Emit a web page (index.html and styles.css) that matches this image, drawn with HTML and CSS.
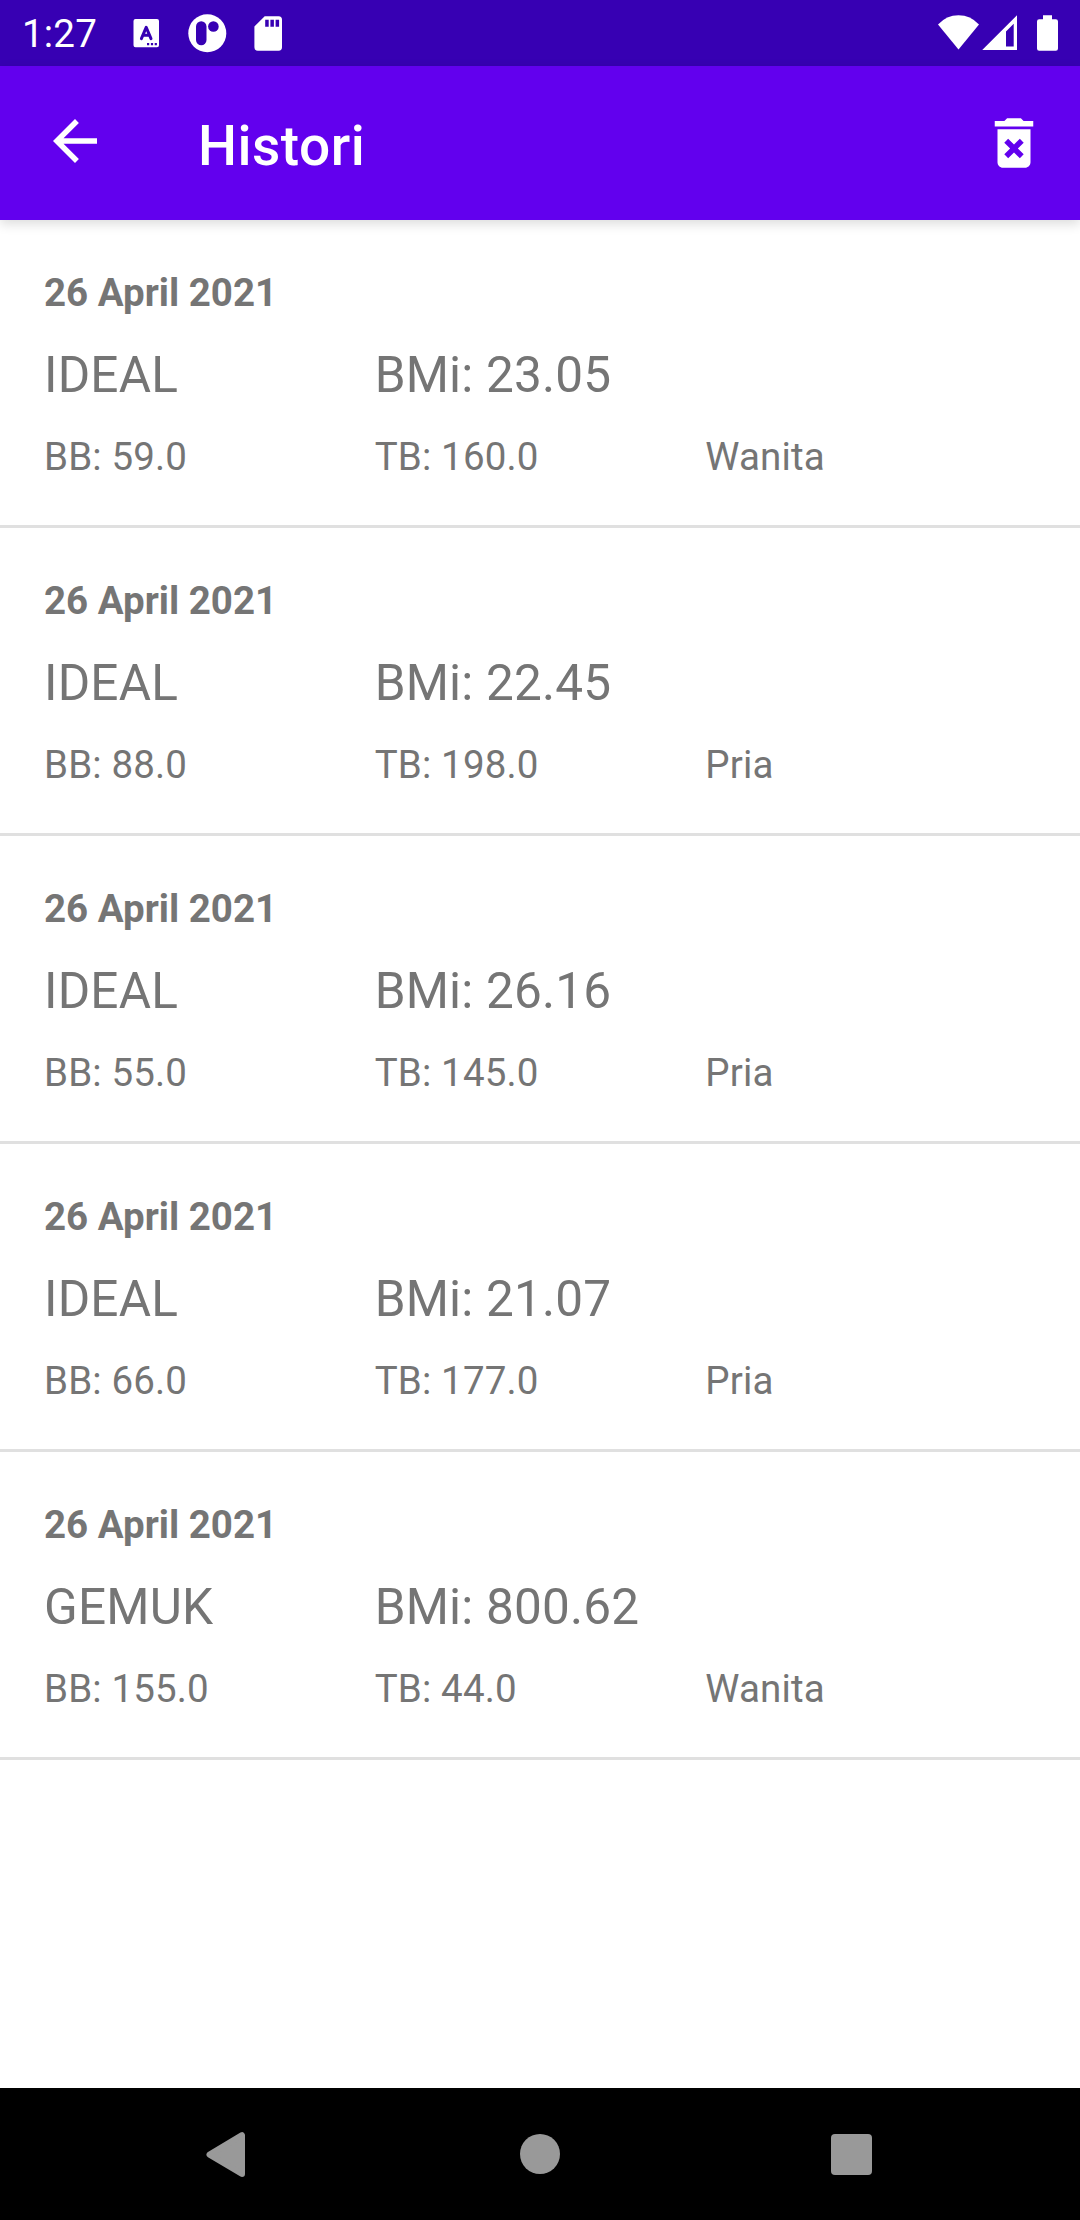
FILE: index.html
```html
<!DOCTYPE html>
<html lang="id">
<head>
<meta charset="utf-8">
<title>Histori</title>
<link rel="stylesheet" href="styles.css">
</head>
<body>
<div class="screen">
  <div class="status-bar">
    <span class="clock">1:27</span>
    <svg class="status-notifications" width="150" height="40" viewBox="0 0 150 40" fill="#fff">
      <path fill-rule="evenodd" d="M3.500 6h21.500a2 2 0 0 1 2 2v24.300a2 2 0 0 1-2 2H3.500a2 2 0 0 1-2-2V8a2 2 0 0 1 2-2zM15 30v2.200h2.200V30zm3.900 0v2.200h2.200V30zm3.800 0v2.200h2.200V30z"/>
      <path d="M9.400 25.600L14.200 14.300 19 25.600M11 22.300h6.400" fill="none" stroke="#3700b3" stroke-width="3" stroke-linecap="round" stroke-linejoin="round"/>
      <circle cx="75.300" cy="20.300" r="19"/>
      <rect x="64" y="8.300" width="10.500" height="24" rx="5.250" fill="#3700b3"/>
      <circle cx="81.400" cy="13.500" r="5.300" fill="#3700b3"/>
      <path fill-rule="evenodd" d="M132.700 3.300h14a3.400 3.400 0 0 1 3.300 3.400v27.600a3.400 3.400 0 0 1-3.400 3.400h-20.800a3.400 3.400 0 0 1-3.400-3.400V13.500zM133.200 6.700v7h3.500v-7zm5.200 0v7h3.500v-7zm5.200 0v7h3.500v-7z"/>
    </svg>
    <svg class="status-system" width="122" height="40" viewBox="0 0 122 40" fill="#fff">
      <path d="M0 11.500Q8.500 2.300 20.500 2.300T41 11.500L20.500 36.500z"/>
      <path fill-rule="evenodd" d="M44.200 37L79 2.300V37zM68 18.500V33.500h7.700V10.800z"/>
      <path d="M105 2.300h9v3.900h3.800a2.200 2.200 0 0 1 2.200 2.200v27.200a2.200 2.200 0 0 1-2.200 2.200h-16.600a2.200 2.200 0 0 1-2.200-2.200V8.400a2.200 2.200 0 0 1 2.200-2.200h3.800z"/>
    </svg>
  </div>
  <header class="app-bar">
    <svg class="icon-back" width="66" height="66" viewBox="0 0 24 24" fill="#fff"><path d="M20 11H7.830l5.590-5.590L12 4l-8 8 8 8 1.410-1.410L7.830 13H20v-2z"/></svg>
    <h1 class="title">Histori</h1>
    <svg class="icon-delete" width="66" height="66" viewBox="0 0 24 24" fill="#fff"><path d="M6 19c0 1.100.900 2 2 2h8c1.100 0 2-.900 2-2V7H6v12zm2.460-7.120l1.410-1.410L12 12.590l2.120-2.120 1.410 1.410L13.410 14l2.120 2.120-1.410 1.410L12 15.410l-2.120 2.120-1.410-1.410L10.590 14l-2.130-2.120zM15.500 4l-1-1h-5l-1 1H5v2h14V4z"/></svg>
  </header>
  <main class="history">
    <article class="entry">
      <div class="date">26 April 2021</div>
      <div class="row result"><span>IDEAL</span><span>BMi: 23.05</span></div>
      <div class="row"><span>BB: 59.0</span><span>TB: 160.0</span><span>Wanita</span></div>
    </article>
    <article class="entry">
      <div class="date">26 April 2021</div>
      <div class="row result"><span>IDEAL</span><span>BMi: 22.45</span></div>
      <div class="row"><span>BB: 88.0</span><span>TB: 198.0</span><span>Pria</span></div>
    </article>
    <article class="entry">
      <div class="date">26 April 2021</div>
      <div class="row result"><span>IDEAL</span><span>BMi: 26.16</span></div>
      <div class="row"><span>BB: 55.0</span><span>TB: 145.0</span><span>Pria</span></div>
    </article>
    <article class="entry">
      <div class="date">26 April 2021</div>
      <div class="row result"><span>IDEAL</span><span>BMi: 21.07</span></div>
      <div class="row"><span>BB: 66.0</span><span>TB: 177.0</span><span>Pria</span></div>
    </article>
    <article class="entry">
      <div class="date">26 April 2021</div>
      <div class="row result"><span>GEMUK</span><span>BMi: 800.62</span></div>
      <div class="row"><span>BB: 155.0</span><span>TB: 44.0</span><span>Wanita</span></div>
    </article>
  </main>
  <nav class="nav-bar">
    <svg class="nav-back" width="40" height="46" viewBox="0 0 40 46"><path d="M3.500 22.600L36 3.200v38.800z" fill="#999" stroke="#999" stroke-width="6" stroke-linejoin="round"/></svg>
    <span class="nav-home"></span>
    <span class="nav-recent"></span>
  </nav>
</div>
</body>
</html>
```

FILE: styles.css
```css
* {
  box-sizing: border-box;
}

body {
  margin: 0;
  background: #fff;
  color: #757575;
  font-family: Roboto, "Liberation Sans", sans-serif;
  font-size: 38.5px;
}

svg {
  display: block;
  flex: none;
}

.screen {
  display: flex;
  flex-direction: column;
  width: 1080px;
  height: 2220px;
}

.status-bar {
  display: flex;
  align-items: center;
  height: 66px;
  padding: 0 20px 0 22px;
  background: #3700b3;
  color: #fff;
}

.clock {
  width: 110px;
  padding-top: 2px;
  line-height: 52px;
  letter-spacing: 0.2px;
}

.status-system {
  margin-left: auto;
}

.app-bar {
  display: flex;
  align-items: center;
  height: 154px;
  padding: 0 33px 0 42px;
  background: #6200ee;
  color: #fff;
  box-shadow: 0 4px 11px rgba(0, 0, 0, 0.14);
}

.icon-back {
  margin-bottom: 4px;
}

.title {
  margin: 6px 0 0 90px;
  font-size: 55px;
  font-weight: 500;
  line-height: 64px;
  letter-spacing: 0.5px;
}

.icon-delete {
  margin-left: auto;
}

.history {
  flex: 1;
}

.entry {
  display: flex;
  flex-direction: column;
  gap: 23px;
  padding: 47px 44px 42px;
  border-bottom: 3px solid #e0e0e0;
  line-height: 52px;
}

.date {
  font-weight: 700;
}

.row {
  display: grid;
  grid-template-columns: repeat(3, 1fr);
  letter-spacing: 0.15px;
}

.result {
  font-size: 49.5px;
  line-height: 66px;
  letter-spacing: 0.2px;
}

.nav-bar {
  display: flex;
  align-items: flex-start;
  height: 132px;
  padding: 44px 208px 0 206px;
  background: #000;
}

.nav-home {
  width: 40px;
  height: 40px;
  margin: 2px 0 0 274px;
  border-radius: 50%;
  background: #999;
}

.nav-recent {
  width: 41px;
  height: 41px;
  margin: 2px 0 0 auto;
  border-radius: 4px;
  background: #999;
}
```
